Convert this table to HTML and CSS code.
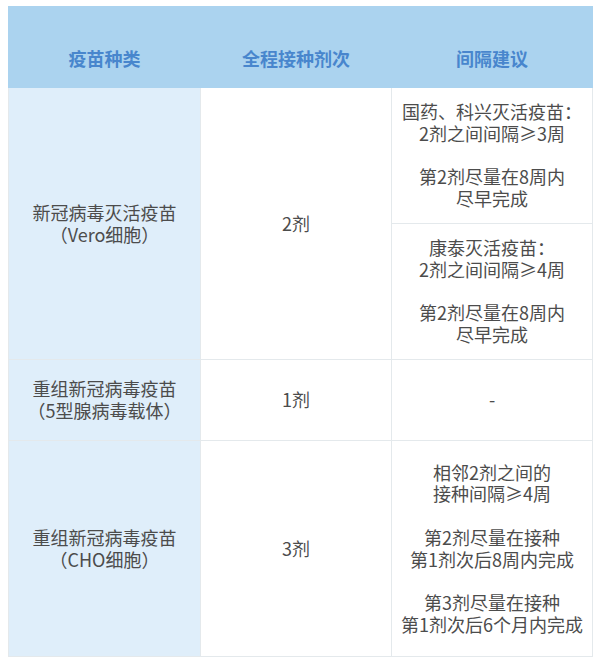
FILE: index.html
```html
<!DOCTYPE html>
<html lang="zh">
<head>
<meta charset="utf-8">
<link rel="stylesheet" href="styles.css">
</head>
<body>
<div class="wrap">
<table class="vt">
  <thead>
    <tr class="hr">
      <th class="c1">疫苗种类</th>
      <th class="c2">全程接种剂次</th>
      <th class="c3">间隔建议</th>
    </tr>
  </thead>
  <tbody>
    <tr class="r1a">
      <td class="c1 name" rowspan="2">新冠病毒灭活疫苗<br>（Vero细胞）</td>
      <td class="c2" rowspan="2">2剂</td>
      <td class="c3">国药、科兴灭活疫苗：<br>2剂之间间隔≥3周<br><br>第2剂尽量在8周内<br>尽早完成</td>
    </tr>
    <tr class="r1b">
      <td class="c3">康泰灭活疫苗：<br>2剂之间间隔≥4周<br><br>第2剂尽量在8周内<br>尽早完成</td>
    </tr>
    <tr class="r2">
      <td class="c1 name">重组新冠病毒疫苗<br>（5型腺病毒载体）</td>
      <td class="c2">1剂</td>
      <td class="c3">-</td>
    </tr>
    <tr class="r3">
      <td class="c1 name">重组新冠病毒疫苗<br>（CHO细胞）</td>
      <td class="c2">3剂</td>
      <td class="c3">相邻2剂之间的<br>接种间隔≥4周<br><br>第2剂尽量在接种<br>第1剂次后8周内完成<br><br>第3剂尽量在接种<br>第1剂次后6个月内完成</td>
    </tr>
  </tbody>
</table>
</div>
</body>
</html>
```
FILE: styles.css
```css
html, body {
  margin: 0;
  padding: 0;
  background: #ffffff;
}
.wrap {
  padding: 6px 8px 0 8px;
}
.vt {
  width: 584px;
  border-collapse: collapse;
  table-layout: fixed;
  font-family: "Noto Sans CJK SC", "Noto Sans", sans-serif;
  font-size: 18px;
  line-height: 21.7px;
  color: #4c4c4c;
}
.vt th, .vt td {
  padding: 0;
  text-align: center;
  vertical-align: middle;
  border: 1px solid #e4e9ec;
}
.vt th {
  background: #abd3ef;
  color: #4886cd;
  font-weight: bold;
  border-color: #abd3ef;
  padding-top: 23px;
  height: 58px;
  box-sizing: border-box;
}
.vt .c1 { width: 192px; }
.vt .c2 { width: 191px; }
.vt .c3 { width: 201px; }
.vt td.name {
  background: #dfeefa;
}
.hr { height: 81px; }
.r1a { height: 136px; }
.r1b { height: 136px; }
.r2 { height: 81px; }
.r3 { height: 216px; }
```
